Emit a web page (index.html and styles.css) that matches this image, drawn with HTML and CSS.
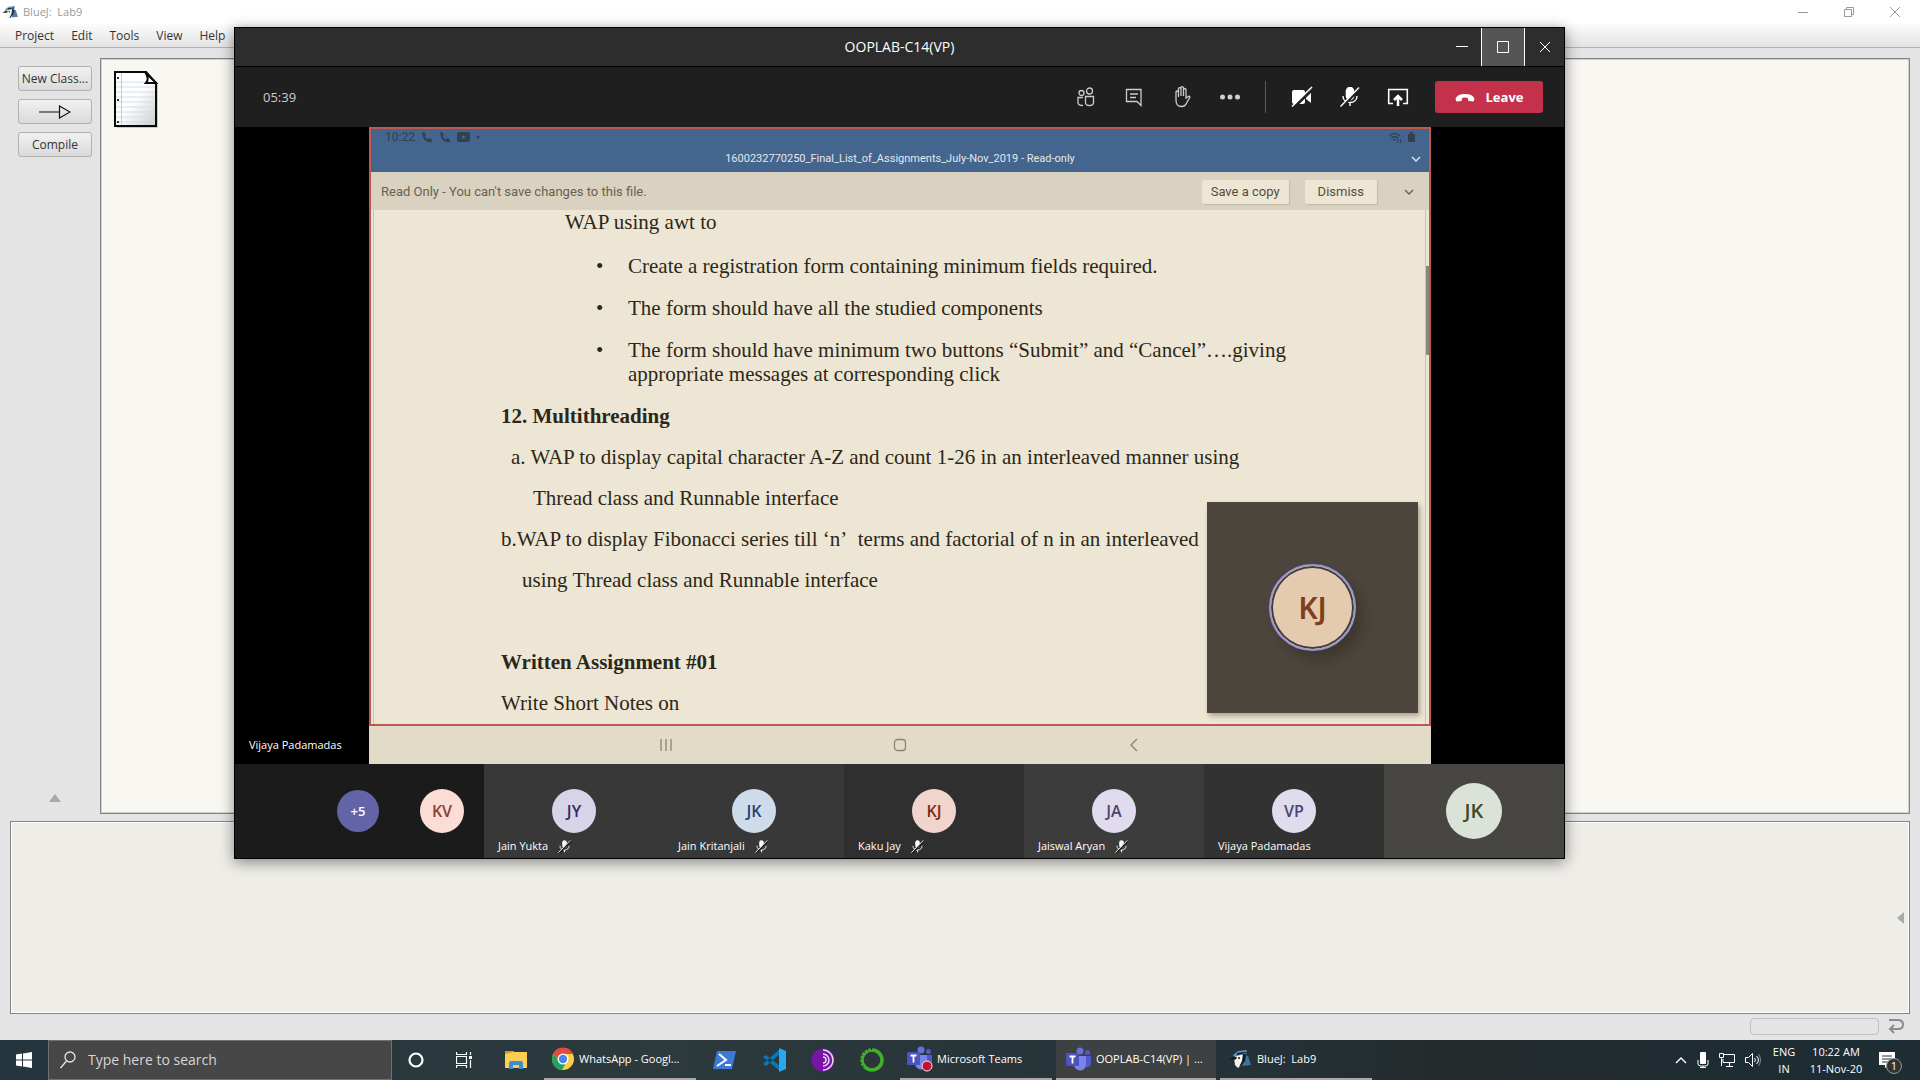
FILE: index.html
```html
<!DOCTYPE html>
<html lang="en">
<head>
<meta charset="utf-8">
<title>BlueJ: Lab9</title>
<link rel="stylesheet" href="styles.css">
</head>
<body>
<svg class="defs" aria-hidden="true">
  <symbol id="jay" viewBox="0 0 22 18">
    <path d="M14 4 19 6 22 15 14 16z" fill="#3e719f"/>
    <path d="M5 7 9 4l6 1 1 4-3 6-4 3-3-3z" fill="#f4f5f2"/>
    <path d="M4 5 9 1l9-1-1 4-5 1-7 2z" fill="#5b8fbd"/>
    <path d="M0 9.500 5 6.500l3 1-1 2zM14 4l3 1-1 6-4 5-2 1 3-6zM8 3l9-1v1L8 5z" fill="#12191e"/>
    <circle cx="10" cy="8" r="1" fill="#111"/>
  </symbol>
  <symbol id="micoff" viewBox="0 0 20 20">
    <rect x="6.500" y="0.500" width="7" height="12" rx="3.500" fill="currentColor"/>
    <path d="M3 9c0 4 3 6.500 7 6.500S17 13 17 9M10 15.500V19" fill="none" stroke="currentColor" stroke-width="1.400"/>
    <path d="M1.500 20.500 20 1" stroke="#1f1f1f" stroke-width="3"/>
    <path d="M.5 19.500 19 .5" stroke="currentColor" stroke-width="1.400"/>
  </symbol>
  <symbol id="teams" viewBox="0 0 26 24">
    <circle cx="14" cy="4" r="3.500" fill="#6870dc"/><circle cx="21.500" cy="5.500" r="2.500" fill="#5059c9"/>
    <path d="M18 9h7v7a4 4 0 0 1-7 3z" fill="#5059c9"/>
    <path d="M8 9h12v8a6 6 0 0 1-12 1z" fill="#7b83eb"/>
    <rect y="6" width="13" height="13" rx="1" fill="#4b53bc"/>
    <path d="M3.500 9.500h6M6.500 9.500v7" stroke="#fff" stroke-width="1.800"/>
  </symbol>
  <symbol id="phone" viewBox="0 0 12 12"><path d="M1 1.500 3.500 1 5 4 3.700 5.200Q5 7.500 7 8.500L8.200 7l3 1.500-.6 2.600Q2 12 1 1.500z" fill="currentColor"/></symbol>
  <symbol id="chev" viewBox="0 0 10 6"><path d="m1 1 4 4 4-4" fill="none" stroke="currentColor" stroke-width="1.300"/></symbol>
</svg>

<div class="desktop">
  <main class="bluej">
    <header class="titlebar">
      <svg class="jay-small"><use href="#jay"/></svg>
      <span class="title">BlueJ:&nbsp; Lab9</span>
      <button class="win" aria-label="Minimize"><svg viewBox="0 0 10 10"><path d="M0 5.500h10"/></svg></button>
      <button class="win" aria-label="Restore"><svg viewBox="0 0 10 10"><path d="M.5 2.500h7v7h-7zM2.500 2V.5h7v7H8"/></svg></button>
      <button class="win" aria-label="Close"><svg viewBox="0 0 10 10"><path d="m0 0 10 10M10 0 0 10"/></svg></button>
    </header>
    <nav class="menu"><a href="#">Project</a><a href="#">Edit</a><a href="#">Tools</a><a href="#">View</a><a href="#">Help</a></nav>
    <div class="workspace">
      <aside class="tools">
        <button>New Class...</button>
        <button aria-label="Inherits arrow"><svg width="32" height="14" viewBox="0 0 32 14"><path d="M0 7h20M20.500 1v12L31 7z" fill="none" stroke="#111" stroke-width="1.200"/></svg></button>
        <button>Compile</button>
        <svg class="up" width="12" height="8"><path d="M0 8 6 0l6 8z" fill="#a9a9a9"/></svg>
      </aside>
      <section class="classes">
        <svg class="paper" viewBox="0 0 48 60">
          <defs><linearGradient id="sheet" x1="0" y1="0" x2="1" y2="1"><stop offset=".5" stop-color="#fff"/><stop offset="1" stop-color="#ccc"/></linearGradient></defs>
          <path d="M2 2h31l10 11v43H2z" fill="#777" opacity=".35" transform="translate(2 2)"/>
          <path d="M2 2h31l10 11v43H2z" fill="url(#sheet)" stroke="#090909" stroke-width="2"/>
          <path d="M3 12h29M3 17h39M3 22h39M3 27h39M3 32h39M3 37h39M3 42h39M3 47h39M3 52h39" stroke="#cddfe9"/>
          <path d="M8.500 3v52" stroke="#dfc4bd"/><path d="M4 8h2M4 30h2M4 52h2" stroke="#333" stroke-width="2"/>
          <path d="M32 2q5 7 1 11h10z" fill="#fff" stroke="#090909" stroke-width="2"/>
        </svg>
      </section>
    </div>
    <section class="bench"><svg width="7" height="12"><path d="M7 0v12L0 6z" fill="#a9a9a9"/></svg></section>
    <footer class="status">
      <div class="progress"></div>
      <svg width="18" height="18" viewBox="0 0 18 18"><path d="M2 3h9q5 0 5 4.500T11 12H4M7 8l-4 4 4 4" fill="none" stroke="#8b8b8b" stroke-width="2"/></svg>
    </footer>
  </main>

  <footer class="taskbar">
    <button class="start" aria-label="Start"><svg width="16" height="16"><path d="M0 2.500 6 1.500V7.500H0zM7 1.400 16 0v7.500H7zM0 8.500h6v6L0 13.500zM7 8.500h9V16l-9-1.400z" fill="#fff"/></svg></button>
    <label class="search"><svg width="16" height="18" viewBox="0 0 16 18"><circle cx="10" cy="6" r="5" /><path d="m6.500 10-6 7"/></svg><input type="text" placeholder="Type here to search" aria-label="Type here to search"></label>
    <button class="slot" aria-label="Cortana"><svg width="16" height="16"><circle cx="8" cy="8" r="6.500" fill="none" stroke="#fff" stroke-width="2.200"/></svg></button>
    <button class="slot" aria-label="Task view"><svg width="16" height="16"><path d="M.5 0v2.500h10V0M.5 4.500h10v7H.5zM.5 16v-2.500h10V16M14.500 0v3M14.500 8v8" fill="none" stroke="#fff" stroke-width="1.200"/><path d="M13 4h3v3h-3z" fill="#fff"/></svg></button>
    <div class="apps">
      <button class="pin" aria-label="File Explorer"><svg width="22" height="18"><path d="M0 0h9v5H0z" fill="#d99a12"/><path d="M0 3 9 1h13v16H0z" fill="#fccf54"/><path d="M4 18v-6q0-2 2-2h10q2 0 2 2v6h-4v-4H8v4z" fill="#3b8fd3"/></svg></button>
      <button class="app"><svg width="24" height="24"><circle cx="12" cy="12" r="11" fill="#fc4"/><path d="M2 7a11 11 0 0 1 20 0H12L8 14z" fill="#e04a3f"/><path d="M2 7a11 11 0 0 0 9 16l5-9-8 0z" fill="#23a15d"/><circle cx="12" cy="12" r="5.500" fill="#fff"/><circle cx="12" cy="12" r="4.200" fill="#4b86ee"/></svg><span>WhatsApp - Googl...</span></button>
      <button class="pin" aria-label="PowerShell"><svg width="24" height="20"><path d="M4 1h19l-4 18H0z" fill="#3f79d8"/><path d="m6 4 7 6-9 6M12 15h6" fill="none" stroke="#fff" stroke-width="2"/></svg></button>
      <button class="pin" aria-label="Visual Studio Code"><svg width="24" height="24"><path d="m1 9 3-2 14 11v5zM1 16l3 2L18 6V1z" fill="#0879bd"/><path d="m17 0 7 3v18l-7 3z" fill="#2ba7ee"/></svg></button>
      <button class="pin" aria-label="Tor Browser"><svg width="24" height="24"><circle cx="12" cy="12" r="11.500" fill="#7716a5"/><path d="M12 2a10 10 0 0 1 0 20M12 6a6 6 0 0 1 0 12M12 9a3 3 0 0 1 0 6" fill="none" stroke="#e8d5f2" stroke-width="1.500"/></svg></button>
      <button class="pin" aria-label="Anaconda"><svg width="24" height="24"><circle cx="12" cy="12" r="10" fill="none" stroke="#43b02a" stroke-width="3.500"/><path d="M12 1A11 11 0 0 0 4 20" fill="none" stroke="#243137" stroke-width="2" stroke-dasharray="1 3"/></svg></button>
      <button class="app"><svg width="26" height="26" viewBox="0 0 26 26"><use href="#teams" width="26" height="24"/><circle cx="20" cy="20" r="5" fill="#c50f33" stroke="#eee"/></svg><span>Microsoft Teams</span></button>
      <button class="app active"><svg width="26" height="24"><use href="#teams"/></svg><span>OOPLAB-C14(VP) | ...</span></button>
      <button class="app"><svg width="26" height="18"><use href="#jay"/></svg><span>BlueJ:&nbsp; Lab9</span></button>
    </div>
    <div class="tray">
      <svg width="12" height="8"><path d="m1 7 5-5 5 5" fill="none" stroke="#fff" stroke-width="1.400"/></svg>
      <svg width="12" height="16"><rect x="3" width="6" height="12" rx="1" fill="#fff"/><path d="M1 8v4q0 2 3 2h4q3 0 3-2V8M6 14v2M3 15.500h6" fill="none" stroke="#fff"/></svg>
      <svg width="16" height="14"><path d="M5 1.500h10.500v8H4V6M7 13.500h7M10.500 10v3M.5.500h4v4h-4zM2.500 5v8" fill="none" stroke="#fff"/></svg>
      <svg width="16" height="14"><path d="M.5 4.500h3l4-4v13l-4-4h-3zM9.500 5q2 2 0 4M11.500 3q4 4 0 8" fill="none" stroke="#fff"/><path d="M13.500 1q4 6 0 12" fill="none" stroke="#888"/></svg>
      <div class="lang">ENG<br>IN</div>
      <div class="clock">10:22 AM<br>11-Nov-20</div>
      <div class="notes"><svg width="16" height="16"><path d="M0 0h16v13h-6l-4 3v-3H0z" fill="#fff"/><path d="M3 4h10M3 7h10M3 10h6" stroke="#24333b"/></svg><span>1</span></div>
    </div>
  </footer>

  <section class="teams">
    <header class="call-title">
      <h1>OOPLAB-C14(VP)</h1>
      <button aria-label="Minimize"><svg width="12" height="12"><path d="M0 5.500h12"/></svg></button>
      <button class="max" aria-label="Maximize"><svg width="12" height="12"><path d="M.5.500h11v11H.5z"/></svg></button>
      <button aria-label="Close"><svg width="12" height="12"><path d="m1 1 10 10M11 1 1 11"/></svg></button>
    </header>
    <div class="call-bar">
      <time>05:39</time>
      <div class="group soft">
        <button aria-label="Participants"><svg width="18" height="20"><circle cx="4.500" cy="6" r="2.500"/><circle cx="12.500" cy="4" r="3"/><path d="M8.500 9.500h8v6q0 3-4 3t-4-3zM6 10.500H1v5q0 3 5 3"/></svg></button>
        <button aria-label="Chat"><svg width="18" height="20"><path d="M2 2.500h14v16l-4-4H1.500V2.500zM5 7h8M5 10.500h6"/></svg></button>
        <button aria-label="Raise hand"><svg width="18" height="22"><path d="M3 12V6q0-1 1-1t1.500 1v5V3q0-1.300 1.200-1.300T8 3v7V2q0-1.300 1.200-1.300T10.500 2v8V3.500q0-1 1.200-1T13 3.500V12l3-2 1 1-4 7q-1 2.500-4.500 2.500Q3 20.500 3 14z"/></svg></button>
        <button aria-label="More actions"><svg width="22" height="8"><g fill="#d0d0d0" stroke="none"><circle cx="3.500" cy="4" r="2.500"/><circle cx="11" cy="4" r="2.500"/><circle cx="18.500" cy="4" r="2.500"/></g></svg></button>
      </div>
      <div class="group bright">
        <button aria-label="Turn camera on"><svg width="22" height="22"><path d="M3 4h9q2 0 2 2v10q0 2-2 2H3q-2 0-2-2V6q0-2 2-2zm12 5 5-4v12l-5-4z" fill="#fff" stroke="none"/><path d="M2 22 23 2" stroke="#1f1f1f" stroke-width="3"/><path d="M1 20.500 21 1"/></svg></button>
        <button aria-label="Unmute"><svg width="20" height="20"><use href="#micoff"/></svg></button>
        <button aria-label="Share"><svg width="22" height="20"><path d="M6 16.500H1.700v-14h18.600v14H16"/><path d="M11 19V9m-4 4 4-4 4 4" stroke-width="2.500"/></svg></button>
      </div>
      <button class="leave"><svg width="20" height="9"><path d="M.5 6Q2 1 10 1t9.500 5l-1 2.500-5-.5-.7-3Q10 4 7.200 5l-.7 3-5 .5z" fill="#fff"/></svg>Leave</button>
    </div>

    <div class="stage">
      <span class="presenter">Vijaya Padamadas</span>
      <div class="shared">
        <div class="screen">
          <div class="phone-bar">
            <div class="phone-status">
              <span>10:22</span>
              <svg width="12" height="12"><use href="#phone"/></svg>
              <svg width="12" height="12"><use href="#phone"/></svg>
              <svg width="13" height="10"><rect width="13" height="10" rx="2" fill="currentColor"/><path d="m5 3 4 2-4 2z" fill="#43658e"/></svg>
              <svg width="4" height="4"><circle cx="2" cy="2" r="1.500" fill="currentColor"/></svg>
              <svg class="wifi" width="14" height="11"><path d="M1 4q5.500-5 11 0M3 6q3.500-3 7 0M5 8q1.500-1 3 0" fill="none" stroke="currentColor" stroke-width="1.300"/><path d="M10 7v4m2.500-4v4" stroke="currentColor"/></svg>
              <svg width="7" height="10"><path d="M0 2h2V0h3v2h2v8H0z" fill="currentColor"/></svg>
            </div>
            <div class="file">1600232770250_Final_List_of_Assignments_July-Nov_2019 - Read-only<svg width="10" height="6"><use href="#chev"/></svg></div>
          </div>
          <div class="banner"><span>Read Only - You can't save changes to this file.</span><button>Save a copy</button><button>Dismiss</button><svg width="10" height="6"><use href="#chev"/></svg></div>
          <article class="page">
            <p class="lead">WAP using awt to</p>
            <ul>
              <li>Create a registration form containing minimum fields required.</li>
              <li>The form should have all the studied components</li>
              <li>The form should have minimum two buttons “Submit” and “Cancel”….giving<br>appropriate messages at corresponding click</li>
            </ul>
            <h2>12. Multithreading</h2>
            <p class="item-a">a. WAP to display capital character A-Z and count 1-26 in an interleaved manner using</p>
            <p class="cont-a">Thread class and Runnable interface</p>
            <p>b.WAP to display Fibonacci series till ‘n’&nbsp; terms and factorial of n in an interleaved</p>
            <p class="cont-b">using Thread class and Runnable interface</p>
            <h2 class="assignment">Written Assignment #01</h2>
            <p>Write Short Notes on</p>
            <div class="thumb"></div>
          </article>
          <div class="float-card"><span>KJ</span></div>
        </div>
        <div class="phone-nav">
          <svg width="16" height="16"><path d="M3 2v12M8 2v12M13 2v12"/></svg>
          <svg width="16" height="16"><rect x="2.500" y="2.500" width="11" height="11" rx="3"/></svg>
          <svg width="16" height="16"><path d="m11 2-6 6 6 6"/></svg>
        </div>
      </div>
    </div>

    <div class="tiles">
      <div class="tile more"><span class="avatar plus">+5</span><span class="avatar kv">KV</span></div>
      <div class="tile t2"><span class="avatar jy">JY</span><span class="name">Jain Yukta <svg><use href="#micoff"/></svg></span></div>
      <div class="tile t2"><span class="avatar jk">JK</span><span class="name">Jain Kritanjali <svg><use href="#micoff"/></svg></span></div>
      <div class="tile t3"><span class="avatar kj">KJ</span><span class="name">Kaku Jay <svg><use href="#micoff"/></svg></span></div>
      <div class="tile t4"><span class="avatar ja">JA</span><span class="name">Jaiswal Aryan <svg><use href="#micoff"/></svg></span></div>
      <div class="tile t5"><span class="avatar ja">VP</span><span class="name">Vijaya Padamadas</span></div>
      <div class="tile t6"><span class="avatar me">JK</span></div>
    </div>
  </section>
</div>
</body>
</html>
```
FILE: styles.css
```css
* { box-sizing: border-box; }
body { margin: 0; font: 12px/16px "Open Sans", "Noto Sans", sans-serif; }
button { font: inherit; color: inherit; border: 0; padding: 0; background: none; display: flex; align-items: center; justify-content: center; }
svg { display: block; flex: none; }
h1, h2, p, ul { margin: 0; padding: 0; font-weight: 400; }
.defs { position: absolute; width: 0; height: 0; }
.desktop { position: relative; min-height: 100vh; display: flex; flex-direction: column; background: #e4e4e4; }

.bluej { flex: 1; display: flex; flex-direction: column; color: #333; }
.titlebar { height: 24px; display: flex; align-items: center; background: #fff; padding: 0 2px; color: #999; }
.jay-small { width: 16px; height: 13px; opacity: .9; }
.title { flex: 1; margin-left: 5px; font-size: 11px; }
.win { width: 46px; height: 20px; }
.win svg { width: 10px; height: 10px; fill: none; stroke: #999; }
.menu { height: 24px; display: flex; align-items: center; gap: 17px; padding: 0 15px; background: linear-gradient(#fcfcfc, #e3e3e3); border-bottom: 1px solid #b2b2b2; }
.menu a { color: #333; text-decoration: none; }
.workspace { flex: 1; display: flex; padding: 10px 10px 7px 0; }
.tools { width: 100px; padding: 8px 8px 12px 18px; display: flex; flex-direction: column; gap: 8px; }
.tools button { height: 25px; border: 1px solid #b0b0b0; border-radius: 3px; background: linear-gradient(#f1f1f1, #dadada); }
.up { margin: auto auto 0; }
.classes { flex: 1; background: #f8f7f2; border: 1px solid #838383; box-shadow: inset 0 0 0 1px #d0d0cc; padding: 11px 12px; }
.paper { width: 48px; height: 60px; }
.bench { height: 193px; margin: 0 10px; padding-right: 5px; border: 1px solid #838383; box-shadow: inset 0 0 0 1px #fff; background: #eeede8; display: flex; align-items: center; justify-content: flex-end; }
.status { height: 26px; display: flex; justify-content: flex-end; align-items: center; gap: 8px; padding: 0 15px 2px 0; }
.progress { width: 129px; height: 17px; border: 1px solid #c0c0c0; border-radius: 4px; }

.taskbar { height: 40px; display: flex; color: #fff; background: linear-gradient(90deg, #25353d, #2c3a3d 35%, #243238 65%, #252b2c 75%, #1e2c33 90%); }
.start { width: 48px; }
.search { width: 344px; display: flex; align-items: center; gap: 12px; padding: 0 11px; background: #474747; border: 1px solid #717171; }
.search svg { fill: none; stroke: #e5e5e5; stroke-width: 1.3; }
.search input { flex: 1; min-width: 0; border: 0; padding: 0; background: none; font: 14px/20px "Open Sans", sans-serif; color: #ddd; }
.search input::placeholder { color: #d6d6d6; opacity: 1; }
.slot { width: 48px; }
.apps { display: flex; margin-left: 3px; }
.pin { width: 49px; }
.app { width: 152px; justify-content: flex-start; gap: 4px; padding-left: 7px; border-bottom: 2px solid #aaa7a5; font-size: 11px; white-space: nowrap; margin-left: 4px; }
.app + .pin { margin-left: 4px; }
.app.active { width: 160px; background: #3d4141; padding-left: 10px; }
.tray { margin-left: auto; display: flex; align-items: center; gap: 10px; padding-right: 17px; text-align: center; line-height: 17px; font-size: 11px; }
.lang { width: 26px; }
.clock { width: 58px; white-space: nowrap; }
.notes { position: relative; width: 28px; padding-left: 4px; }
.notes span { position: absolute; left: 11px; top: 6px; width: 16px; height: 16px; border: 1px solid #999; border-radius: 50%; background: #333; line-height: 14px; }

.teams { position: absolute; left: 234px; right: 355px; top: 27px; border: 1px solid #000; background: #000; color: #fff; box-shadow: 0 3px 14px rgba(0, 0, 0, .45); font-size: 11px; }
.call-title { height: 39px; display: flex; justify-content: flex-end; background: #2d2d2d; border-bottom: 1px solid #000; position: relative; }
.call-title h1 { position: absolute; inset: 0; text-align: center; font-size: 14px; line-height: 38px; }
.call-title button { position: relative; width: 39px; }
.call-title .max { width: 44px; background: #555; border: solid #fff; border-width: 0 1px; }
.call-title svg { fill: none; stroke: #fff; }
.call-bar { height: 60px; background: #1f1f1f; display: flex; align-items: center; padding: 0 21px 0 28px; }
.call-bar time { margin-right: auto; font-size: 13px; color: #ccc; }
.group { display: flex; height: 32px; }
.group button { width: 48px; }
.group svg { fill: none; stroke: #ccc; stroke-width: 1.3; }
.soft { padding-right: 11px; border-right: 1px solid #5a5a5a; }
.bright { padding: 0 13px 0 12px; }
.bright svg { stroke: #fff; stroke-width: 1.6; }
.leave { width: 108px; height: 32px; gap: 11px; border-radius: 3px; background: #c4314b; font-weight: 700; font-size: 13px; }

.stage { position: relative; padding: 0 133px 0 134px; }
.presenter { position: absolute; left: 14px; bottom: 11px; }
.screen { position: relative; border: 2px solid #bf594f; background: #ede6d4; font-family: Roboto, sans-serif; }
.phone-bar { height: 43px; background: #43658e; }
.phone-status { display: flex; align-items: center; gap: 6px; height: 16px; padding: 0 14px; color: #31414f; font-size: 12px; }
.wifi { margin-left: auto; }
.file { position: relative; height: 27px; line-height: 28px; text-align: center; color: #e5e8ec; font-size: 11px; }
.file svg { position: absolute; right: 8px; top: 11px; }
.banner { height: 38px; display: flex; align-items: center; gap: 16px; padding: 1px 15px 0 10px; background: #d9d2c0; color: #68614f; font-size: 13px; }
.banner span { flex: 1; }
.banner button { height: 24px; padding: 0 9px; background: #ede6d4; color: #554d3c; border-radius: 2px; box-shadow: 1px 1px 1px #bfb7a3; }
.banner button + button { padding: 0 13px; }
.banner svg { margin-left: 11px; }
.page { position: relative; min-height: 514px; margin: 0 3px 0 2px; border: solid #cbc4b4; border-width: 0 1px; padding-left: 127px; font: 21px/41px "Liberation Serif", serif; color: #2c2718; white-space: nowrap; }
.page .lead { line-height: 24px; padding-left: 64px; }
.page ul { margin: 20px 0 10px; padding-left: 127px; line-height: 24px; }
.page li { margin-bottom: 18px; padding-left: 0; list-style: none; position: relative; }
.page li:last-child { margin-bottom: 0; }
.page li::before { content: "•"; position: absolute; left: -32px; }
.page h2 { font-size: 21px; font-weight: 700; }
.page .item-a { padding-left: 10px; }
.page .cont-a { padding-left: 32px; }
.page .cont-b { padding-left: 21px; }
.page .assignment { margin-top: 41px; }
.thumb { position: absolute; right: -4px; top: 56px; width: 3px; height: 89px; background: #8d877a; }
.float-card { position: absolute; right: 11px; bottom: 11px; width: 211px; height: 211px; background: #4d463e; box-shadow: 2px 3px 5px #aaa28f; display: flex; align-items: center; justify-content: center; }
.float-card span { width: 87px; height: 87px; border: 2px solid #9999cf; border-radius: 50%; background: #e4cbb0; box-shadow: inset 0 0 0 2px #443d3a, 7px 9px 14px #3d372d; color: #80401b; font: 600 30px/83px "Noto Sans", sans-serif; text-align: center; }
.phone-nav { height: 38px; background: #e2dbc8; display: flex; align-items: center; justify-content: space-between; padding: 0 289px; }
.phone-nav svg { fill: none; stroke: #8a8474; stroke-width: 1.3; }

.tiles { display: flex; height: 94px; }
.tile { position: relative; flex: 180 1 0; display: flex; align-items: center; justify-content: center; }
.more { flex-grow: 249; justify-content: flex-end; gap: 41px; background: #1b1b1b; }
.t2 { background: #383838; }
.t3 { background: #2f2f2f; }
.t4 { background: #3c3c3c; }
.t5 { background: #323232; }
.t6 { background: #474643; }
.avatar { width: 44px; height: 44px; border-radius: 50%; text-align: center; font-size: 16px; line-height: 44px; font-weight: 600; }
.plus { width: 42px; height: 42px; line-height: 42px; font-size: 13px; background: #6264a7; }
.kv { margin-right: 20px; background: #fbddd6; color: #8d3f36; }
.jy { background: #d7d4e9; color: #302b64; }
.jk { background: #cddbea; color: #1d436b; }
.kj { background: #f1d4cc; color: #7c2916; }
.ja { background: #e0dced; color: #4b4470; }
.me { width: 56px; height: 56px; line-height: 56px; font-size: 20px; background: #dbe2d8; color: #374c24; }
.name { position: absolute; left: 14px; bottom: 4px; display: flex; align-items: center; gap: 10px; }
.name svg { width: 13px; height: 13px; }
```
